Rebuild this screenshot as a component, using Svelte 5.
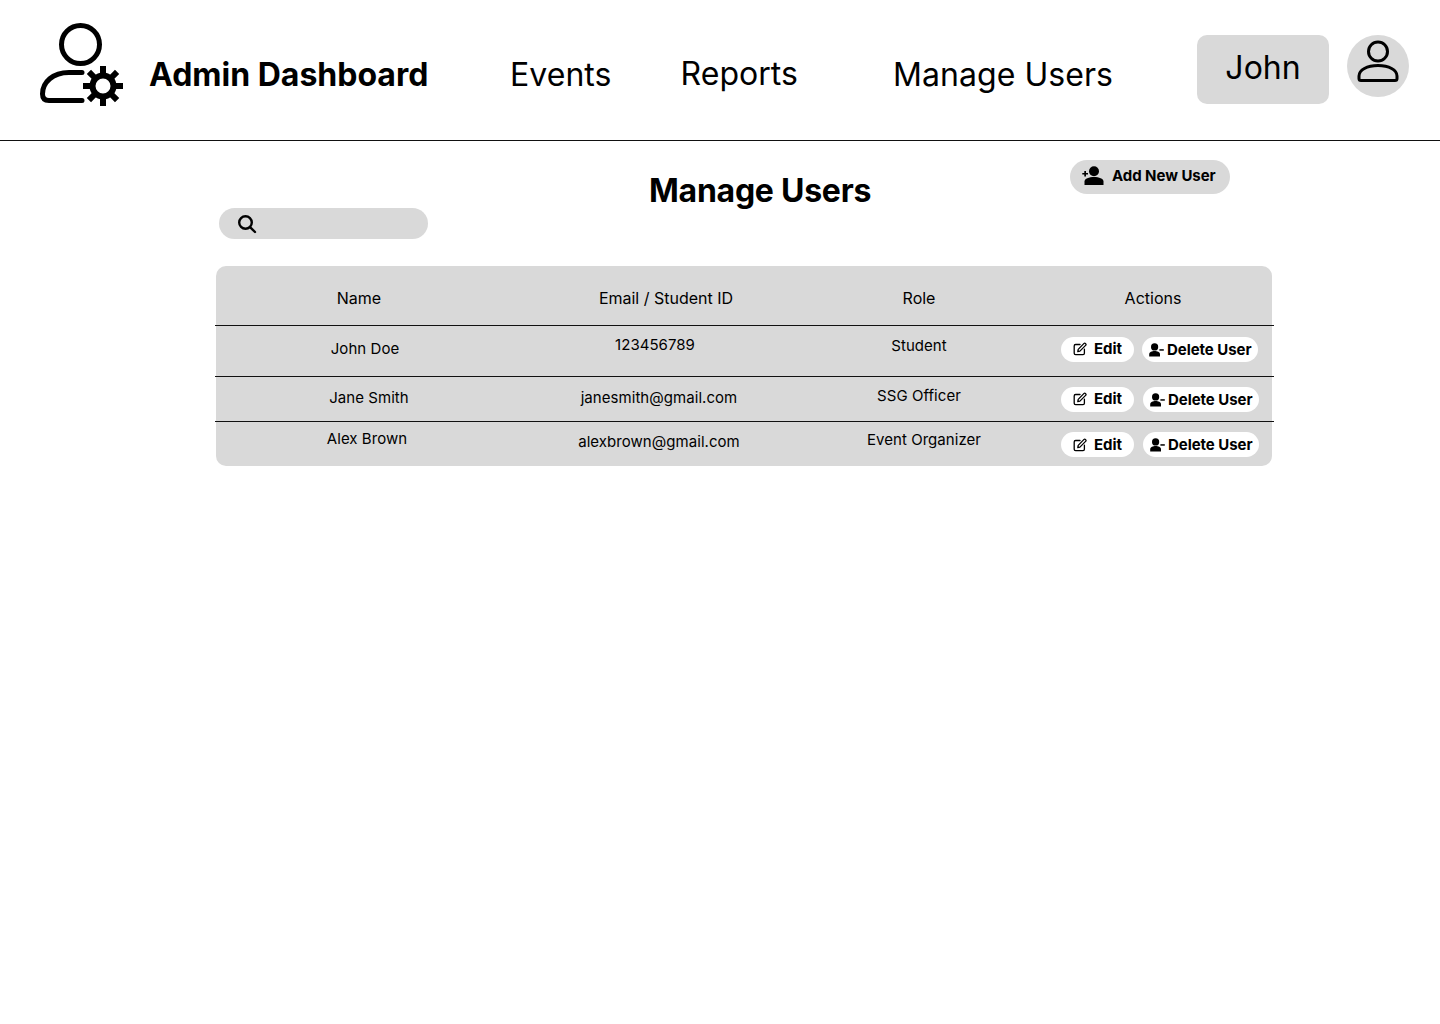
<script>
  const nav = [
    { label: 'Events', cls: 'events' },
    { label: 'Reports', cls: 'reports' },
    { label: 'Manage Users', cls: 'manage' }
  ]

  const columns = [
    { label: 'Name', dx: -5 },
    { label: 'Email / Student ID', dx: 7 },
    { label: 'Role', dx: 0 },
    { label: 'Actions', dx: 1 }
  ]

  const rows = [
    {
      cls: 'first',
      gap: 8,
      shift: -1,
      editLift: 2,
      cells: [
        { text: 'John Doe', dx: 1, dy: -2 },
        { text: '123456789', dx: -4, dy: -6 },
        { text: 'Student', dx: 0, dy: -5 }
      ]
    },
    {
      cls: 'second',
      gap: 9,
      shift: 1,
      editLift: 2,
      cells: [
        { text: 'Jane Smith', dx: 5, dy: -1 },
        { text: 'janesmith@gmail.com', dx: 0, dy: -1 },
        { text: 'SSG Officer', dx: 0, dy: -3 }
      ]
    },
    {
      cls: 'third',
      gap: 9,
      shift: 1,
      editLift: 0,
      cells: [
        { text: 'Alex Brown', dx: 3, dy: -5 },
        { text: 'alexbrown@gmail.com', dx: 0, dy: -2 },
        { text: 'Event Organizer', dx: 5, dy: -4 }
      ]
    }
  ]
</script>

<div class="page">
  <header class="topbar">
    <svg class="logo" viewBox="0 0 92 92" fill="none" stroke="#000" stroke-linecap="round" stroke-linejoin="round">
      <circle cx="44.5" cy="26.5" r="19" stroke-width="5" />
      <path d="M46 54.5 H33 C17 54.5 6.5 64 6.5 76 C6.5 80.5 8.5 82.5 13 82.5 H46" stroke-width="5" />
      <circle cx="67" cy="68" r="10.5" stroke-width="6" />
      <g stroke-width="6" stroke-linecap="butt">
        <path d="M67 48 V56 M67 80 V88 M47 68 H55 M79 68 H87 M52.9 53.9 L58.5 59.5 M75.5 76.5 L81.1 82.1 M81.1 53.9 L75.5 59.5 M58.5 76.5 L52.9 82.1" />
      </g>
    </svg>
    <h1 class="brand">Admin Dashboard</h1>
    <nav class="nav">
      {#each nav as item}
        <span class={item.cls}>{item.label}</span>
      {/each}
    </nav>
    <div class="account">John</div>
    <div class="avatar">
      <svg viewBox="0 0 44 42" fill="none" stroke="#000" stroke-width="3" stroke-linejoin="round">
        <circle cx="22" cy="11.5" r="9.5" />
        <path d="M3 36 C3 30 11 25.5 22 25.5 C33 25.5 41 30 41 36 V38.5 C41 40 40 40.5 39 40.5 H5 C4 40.5 3 40 3 38.5 Z" />
      </svg>
    </div>
  </header>

  <main class="content">
    <div class="toolbar">
      <div class="search">
        <svg viewBox="0 0 20 20" fill="none" stroke="#000" stroke-width="2.4" stroke-linecap="round">
          <circle cx="8.5" cy="8.5" r="6.3" />
          <path d="M13.3 13.3 L18 18" />
        </svg>
      </div>
      <h2 class="title">Manage Users</h2>
      <div class="add-user">
        <svg viewBox="0 0 22 20" fill="#000">
          <circle cx="12" cy="5.2" r="5" />
          <path d="M2.5 19 V15.6 C2.5 12.6 7 11 12 11 C17 11 21.5 12.6 21.5 15.6 V19 Z" />
          <path d="M0.3 7 H6 V8.6 H0.3 Z M2.3 5 H4 V10.6 H2.3 Z" />
        </svg>
        <span>Add New User</span>
      </div>
    </div>

    <section class="table">
      <div class="row head">
        {#each columns as col}
          <div class="cell" style="--dx:{col.dx}px">{col.label}</div>
        {/each}
      </div>
      {#each rows as row}
        <div class="row {row.cls}">
          {#each row.cells as cell}
            <div class="cell" style="--dx:{cell.dx}px; --dy:{cell.dy}px">{cell.text}</div>
          {/each}
          <div class="actions" style="gap:{row.gap}px; --dy:{row.shift}px; --lift:{row.editLift}px">
            <div class="pill edit">
              <svg viewBox="0 0 14 14" fill="none" stroke="#000" stroke-width="1.3" stroke-linecap="round" stroke-linejoin="round">
                <path d="M7 2.5 H2.6 C1.8 2.5 1.2 3.1 1.2 3.9 V11.2 C1.2 12 1.8 12.6 2.6 12.6 H10 C10.8 12.6 11.4 12 11.4 11.2 V7.2" />
                <path d="M5.2 7.4 L10.8 1.6 C11.3 1.1 12.1 1.1 12.6 1.6 C13.1 2.1 13.1 2.9 12.6 3.4 L6.9 9.1 L4.8 9.6 Z" />
              </svg>
              <span>Edit</span>
            </div>
            <div class="pill delete">
              <svg viewBox="0 0 15 14" fill="#000">
                <circle cx="5.6" cy="3.9" r="3.6" />
                <path d="M0.2 13.6 V11 C0.2 9 3 7.9 5.6 7.9 C8.2 7.9 11 9 11 11 V13.6 Z" />
                <path d="M10.4 6.2 H14.8 V7.7 H10.4 Z" />
              </svg>
              <span>Delete User</span>
            </div>
          </div>
        </div>
      {/each}
    </section>
  </main>
</div>

<style>
  :global(body) {
    background: #fff;
  }

  .page {
    height: 1024px;
    overflow: hidden;
    font-family: Inter, "Liberation Sans", sans-serif;
    color: #000;
  }

  .topbar {
    display: flex;
    align-items: center;
    height: 141px;
    box-sizing: border-box;
    padding: 0 31px 0 36px;
    border-bottom: 1.5px solid #111;
  }

  .logo {
    width: 92px;
    height: 92px;
    margin-top: -12px;
    flex: none;
  }

  .brand {
    margin: 8px 0 0 21px;
    width: 361px;
    flex: none;
    font-size: 32px;
    font-weight: 700;
    white-space: nowrap;
  }

  .nav {
    display: flex;
    align-items: flex-start;
    flex: 1;
    font-size: 32px;
    letter-spacing: 0.05px;
    margin-top: 7px;
  }

  .events {
    margin-top: 1px;
  }

  .reports {
    margin-left: 69px;
  }

  .manage {
    margin-left: 95px;
    margin-top: 1px;
  }

  .account {
    width: 132px;
    height: 69px;
    margin-top: -2px;
    padding-bottom: 4px;
    box-sizing: border-box;
    border-radius: 10px;
    background: #d9d9d9;
    display: flex;
    align-items: center;
    justify-content: center;
    font-size: 32px;
    flex: none;
  }

  .avatar {
    width: 62px;
    height: 62px;
    margin: -9px 0 0 18px;
    border-radius: 50%;
    background: #d9d9d9;
    display: flex;
    align-items: center;
    justify-content: center;
    flex: none;
  }

  .avatar svg {
    width: 44px;
    height: 42px;
    margin-bottom: 10px;
  }

  .content {
    width: 1056px;
    margin-left: 216px;
  }

  .toolbar {
    display: grid;
    grid-template-columns: 433px 421px 200px;
    height: 125px;
    align-items: start;
  }

  .search {
    width: 209px;
    height: 31px;
    margin: 67px 0 0 3px;
    border-radius: 16px;
    background: #d9d9d9;
    display: flex;
    align-items: center;
    padding-left: 18px;
    box-sizing: border-box;
  }

  .search svg {
    width: 20px;
    height: 20px;
  }

  .title {
    margin: 30px 0 0;
    font-size: 32px;
    line-height: 39px;
    font-weight: 700;
    letter-spacing: -0.25px;
    white-space: nowrap;
  }

  .add-user {
    width: 160px;
    height: 34px;
    margin-top: 19px;
    padding: 0 0 3px 12px;
    border-radius: 17px;
    background: #d9d9d9;
    display: flex;
    align-items: center;
    box-sizing: border-box;
    font-size: 15px;
    font-weight: 700;
    letter-spacing: -0.05px;
    white-space: nowrap;
  }

  .add-user svg {
    width: 22px;
    height: 20px;
    margin-right: 8px;
  }

  .table {
    background: #d9d9d9;
    border-radius: 10px;
  }

  .row {
    position: relative;
    display: grid;
    grid-template-columns: 296px 294px 226px 240px;
    align-items: center;
    font-size: 15px;
    letter-spacing: 0.05px;
    box-sizing: border-box;
  }

  .row::after {
    content: "";
    position: absolute;
    left: -1px;
    right: -2px;
    bottom: -1px;
    height: 1px;
    background: #111;
  }

  .third::after {
    display: none;
  }

  .head {
    height: 59px;
    padding-top: 5px;
    font-size: 16px;
    letter-spacing: 0;
  }

  .first {
    height: 51px;
  }

  .second {
    height: 45px;
  }

  .third {
    height: 45px;
  }

  .cell {
    text-align: center;
    translate: var(--dx, 0) var(--dy, 0);
    white-space: nowrap;
  }

  .actions {
    display: flex;
    padding-left: 29px;
    translate: 0 var(--dy, 0);
  }

  .pill {
    height: 25px;
    border-radius: 13px;
    background: #fff;
    display: flex;
    align-items: center;
    box-sizing: border-box;
    font-size: 15px;
    font-weight: 700;
    letter-spacing: -0.05px;
    white-space: nowrap;
  }

  .edit {
    width: 73px;
    padding-left: 12px;
    padding-bottom: var(--lift, 0);
  }

  .edit svg {
    width: 14px;
    height: 14px;
    margin-right: 7px;
  }

  .delete {
    width: 116px;
    padding-left: 7px;
  }

  .delete svg {
    width: 15px;
    height: 14px;
    margin-right: 3px;
  }
</style>
